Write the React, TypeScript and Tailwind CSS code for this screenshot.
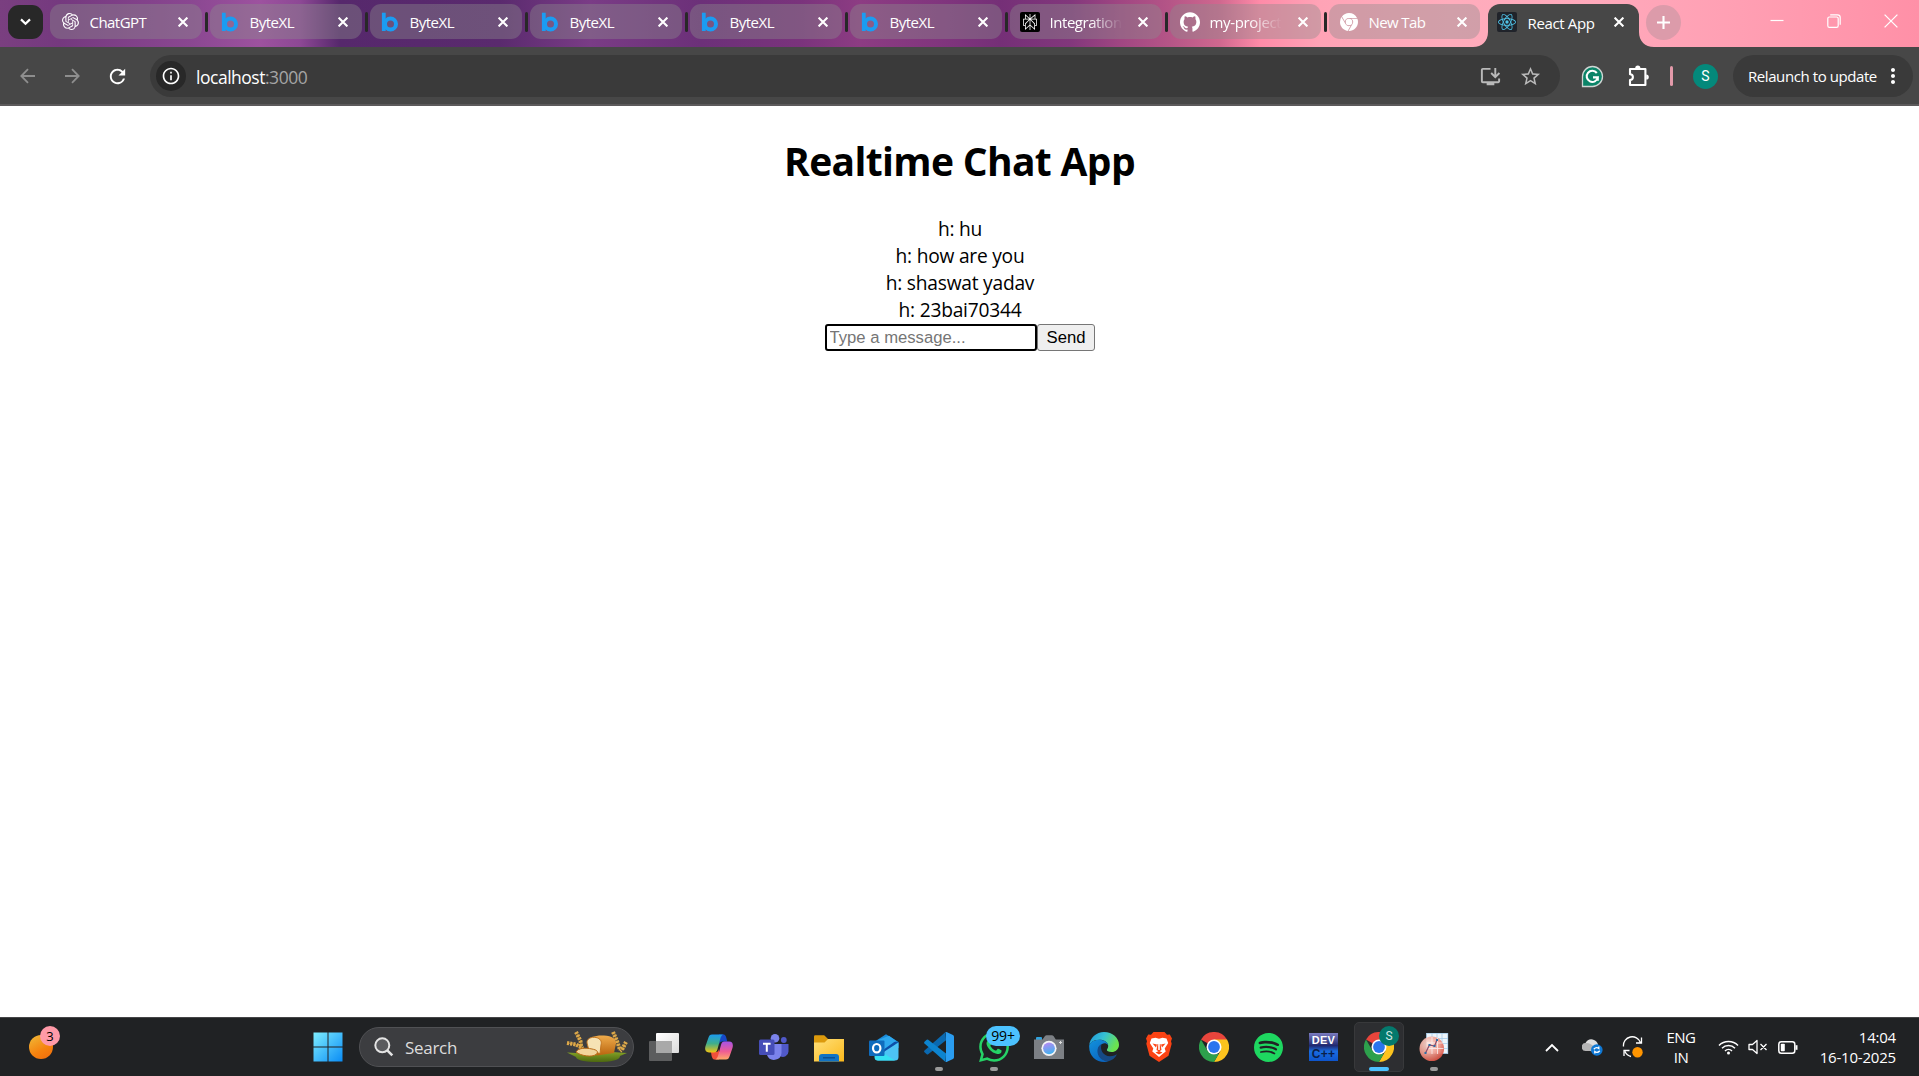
import React from "react";
import {
  SiOpenai,
  SiPerplexity,
  SiGithub,
  SiGooglechrome,
  SiReact,
  SiWhatsapp,
  SiSpotify,
} from "react-icons/si";
import { MdInstallDesktop, MdStarBorder, MdMoreVert, MdInfoOutline, MdRefresh } from "react-icons/md";

const UI = "font-['Open_Sans','Noto_Sans',sans-serif]";

function Cross() {
  return (
    <svg width="10" height="10" viewBox="0 0 10 10" stroke="#fff" strokeWidth="2.1">
      <path d="M.6 .6 9.4 9.4M9.4 .6 .6 9.4" />
    </svg>
  );
}

function ByteXL() {
  return (
    <svg width="18" height="20" viewBox="0 0 18 20" fill="none" stroke="#1b9cf2">
      <path d="M2.800 .7v18.300" strokeWidth="3.800" />
      <circle cx="9.500" cy="12" r="5.500" strokeWidth="4" />
    </svg>
  );
}

function Perplexity() {
  return (
    <div className="flex size-5 items-center justify-center rounded-[2px] bg-black text-white">
      <SiPerplexity size={16} />
    </div>
  );
}

function ReactMark() {
  return (
    <div className="flex size-5 items-center justify-center rounded-[2px] bg-[#20232a] text-[#4fc3e8]">
      <SiReact size={18} />
    </div>
  );
}

type TabInfo = { title: string; icon: React.ReactNode; text: string; fade?: boolean; width?: string };

const tabs: TabInfo[] = [
  { title: "ChatGPT", icon: <SiOpenai size={17} color="#fff" />, text: "tracking-[-0.55px]" },
  { title: "ByteXL", icon: <ByteXL />, text: "tracking-[-0.5px]" },
  { title: "ByteXL", icon: <ByteXL />, text: "tracking-[-0.5px]" },
  { title: "ByteXL", icon: <ByteXL />, text: "tracking-[-0.5px]" },
  { title: "ByteXL", icon: <ByteXL />, text: "tracking-[-0.5px]" },
  { title: "ByteXL", icon: <ByteXL />, text: "tracking-[-0.5px]" },
  { title: "Integration", icon: <Perplexity />, text: "tracking-[-0.45px]", fade: true },
  {
    title: "my-project",
    icon: <SiGithub size={20} color="#fff" />,
    text: "tracking-[-0.35px]",
    fade: true,
    width: "w-[151px]",
  },
  { title: "New Tab", icon: <SiGooglechrome size={18} color="#fff" />, text: "tracking-[-0.6px]", width: "w-[151px]" },
];

function Tab({ t, last }: { t: TabInfo; last: boolean }) {
  return (
    <>
      <div
        className={`flex h-[35px] shrink-0 items-center rounded-[11px] bg-[#8c8c8c]/40 pl-[10px] ${t.width ?? "w-[152px]"}`}
      >
        <div className="flex w-5 shrink-0 items-center justify-center">{t.icon}</div>
        <div
          className={`mt-px ml-[9.500px] w-[72px] overflow-hidden text-[15px] leading-[22px] whitespace-nowrap text-white ${t.text} ${
            t.fade ? "[mask-image:linear-gradient(90deg,#000_55%,transparent)]" : ""
          }`}
        >
          {t.title}
        </div>
        <div className="ml-[16px] flex">
          <Cross />
        </div>
      </div>
      {!last && <div className="mr-[2.500px] ml-[3px] h-5 w-[2.500px] shrink-0 rounded-full bg-[#282828]" />}
    </>
  );
}

function TabStrip() {
  return (
    <div className="flex h-[47px] items-start bg-[linear-gradient(90deg,#7a3f80_0px,#75397f_60px,#8a4791_190px,#9d529f_260px,#8d4895_300px,#56286c_340px,#5a2a6e_500px,#7a3c86_590px,#6c3079_700px,#7a337c_800px,#8d3c83_860px,#7f347d_950px,#752f77_1000px,#82377c_1070px,#a04682_1120px,#b55587_1170px,#d0688f_1220px,#ff8ba8_1260px,#ffa3b6_1320px,#ffacbc_1450px,#ffa9bb_1600px,#ff9fb3_1740px,#ff90a7_1919px)] pt-1">
      <div className="mt-px ml-2 flex h-[34px] w-[35px] shrink-0 items-center justify-center rounded-[11px] bg-[#282828]">
        <svg width="11" height="8" viewBox="0 0 11 8" fill="none" stroke="#fff" strokeWidth="2.2">
          <path d="m1 1.4 4.5 4.4L10 1.4" />
        </svg>
      </div>
      <div className="ml-[7px] flex items-center">
        {tabs.map((t, i) => (
          <Tab key={i} t={t} last={i === tabs.length - 1} />
        ))}
      </div>
      <div className="-ml-[7px] flex h-[43px] items-end">
        <svg width="15" height="15" viewBox="0 0 15 15" fill="#474747">
          <path d="M0 15C9 15 15 9 15 0v15z" />
        </svg>
        <div className="flex h-[43px] w-[151px] items-start rounded-t-[12px] bg-[#474747] pt-2 pl-[9px]">
          <ReactMark />
          <div className="ml-[10.500px] w-[72px] text-[15px] leading-[22px] tracking-[-0.35px] whitespace-nowrap text-white">
            React App
          </div>
          <div className="mt-[5px] ml-[14px]">
            <Cross />
          </div>
        </div>
        <svg width="15" height="15" viewBox="0 0 15 15" fill="#474747">
          <path d="M15 15C6 15 0 9 0 0v15z" />
        </svg>
      </div>
      <div className="mt-px -ml-2 flex size-[35px] items-center justify-center rounded-full bg-[#dc9baa]">
        <svg width="13" height="13" viewBox="0 0 13 13" stroke="#fff" strokeWidth="2.1">
          <path d="M6.5 0v13M0 6.5h13" />
        </svg>
      </div>
      <div className="mt-[10px] mr-[21px] ml-auto flex items-center gap-[43px]">
        <svg width="14" height="14" viewBox="0 0 14 14" stroke="#fff" strokeWidth="1.2">
          <path d="M.5 6.5h13" />
        </svg>
        <svg width="14" height="14" viewBox="0 0 14 14" fill="none" stroke="#fff" strokeWidth="1.2">
          <rect x=".8" y="3" width="10.4" height="10.4" rx="1.6" />
          <path d="M3.2 .8h7.3a2.7 2.7 0 0 1 2.7 2.7v7.3" />
        </svg>
        <svg width="14" height="14" viewBox="0 0 14 14" stroke="#fff" strokeWidth="1.3">
          <path d="M.6 .6 13.4 13.4M13.4 .6 .6 13.4" />
        </svg>
      </div>
    </div>
  );
}

function Toolbar() {
  return (
    <div className="flex h-[59px] items-start border-b-2 border-[#5c5a5b] bg-[#474747] pt-2">
      <div className="flex h-[42px] w-[150px] shrink-0 items-center pl-5">
        <svg width="15" height="16" viewBox="0 0 15 16" fill="none" stroke="#8e8e8e" strokeWidth="1.8">
          <path d="M15 8H1.5M8 1.2 1.3 8 8 14.8" />
        </svg>
        <svg className="ml-[30px]" width="15" height="16" viewBox="0 0 15 16" fill="none" stroke="#8e8e8e" strokeWidth="1.8">
          <path d="M0 8h13.5M7 1.2 13.7 8 7 14.8" />
        </svg>
        <MdRefresh className="ml-[26px]" size={23} color="#fff" />
      </div>
      <div className="flex h-[42px] w-[1410px] shrink-0 items-center rounded-full bg-[#3a3a3a] pl-[6px]">
        <div className="flex size-[30px] items-center justify-center rounded-full bg-[#282828]">
          <MdInfoOutline size={20} color="#fff" />
        </div>
        <div className="mt-px ml-[10px] text-[17.500px] leading-6 tracking-[-0.480px] text-white">
          localhost<span className="text-[#a5a5a5]">:3000</span>
        </div>
        <MdInstallDesktop className="mr-[17px] ml-auto" size={23} color="#b9b9b9" />
        <MdStarBorder className="mr-[18px]" size={23} color="#b9b9b9" />
      </div>
      <div className="ml-[21px] flex h-[42px] items-center">
        <svg width="23" height="23" viewBox="0 0 23 23">
          <path d="M1.5 21.5V11.5a10 10 0 1 1 10 10z" fill="#0b8468" stroke="#cfd6d4" strokeWidth="1.3" />
          <path d="M15.800 8A5.600 5.600 0 1 0 16.800 12.400H12M16.800 12.400v3.400" fill="none" stroke="#fff" strokeWidth="2.1" />
        </svg>
        <svg className="ml-[24px]" width="22" height="22" viewBox="0 0 22 22" fill="none" stroke="#fff" strokeWidth="2.1" strokeLinejoin="round">
          <path d="M2 4h15.400V20H2v-5a2.900 2.900 0 0 0 0-5.800z" />
          <path d="M7.200 3.200a2.600 2.600 0 0 1 5.200 0zM18.200 9.400a2.600 2.600 0 0 1 0 5.200z" fill="#fff" stroke="none" />
        </svg>
        <div className="ml-[20px] h-5 w-[3px] rounded-full bg-[#e39aaa]" />
        <div className="ml-[20px] flex size-[25px] items-center justify-center rounded-full bg-[#04897b] font-[Roboto,sans-serif] text-[14px] leading-none text-white">
          S
        </div>
      </div>
      <div className="ml-[15px] flex h-[42px] w-[180px] items-center rounded-full bg-[#3a3a3a] pl-[15px]">
        <span className="w-[130px] text-[15px] leading-5 tracking-[-0.420px] whitespace-nowrap text-white">
          Relaunch to update
        </span>
        <MdMoreVert className="ml-[3px]" size={24} color="#fff" />
      </div>
    </div>
  );
}

const messages = ["h: hu", "h: how are you", "h: shaswat yadav", "h: 23bai70344"];

function ChatPage() {
  return (
    <main className="flex flex-1 flex-col items-center bg-white pt-7 text-black">
      <h1 className="text-[39px] leading-[54px] font-bold tracking-[-0.650px] whitespace-nowrap">Realtime Chat App</h1>
      <div className="mt-[27px] flex flex-col items-center">
        {messages.map((m) => (
          <div key={m} className="h-[27px] pl-px text-[19.200px] leading-[27px] tracking-[-0.230px] whitespace-nowrap">
            {m}
          </div>
        ))}
      </div>
      <div className="mt-[1px] flex">
        <input
          className="h-[27px] w-[212px] rounded-[3px] border-2 border-black px-[3px] font-['Liberation_Sans',Arial,sans-serif] text-[16.670px] placeholder:text-[#757575] focus:outline-none"
          placeholder="Type a message..."
        />
        <button className="h-[27px] w-[58px] rounded-[3px] border border-[#767676] bg-[#efefef] pt-px pl-px font-['Liberation_Sans',Arial,sans-serif] text-[16.670px] leading-none">
          Send
        </button>
      </div>
    </main>
  );
}

function Wheat({ d }: { d: string }) {
  return (
    <>
      <path d={d} stroke="#a8732a" strokeWidth="1" fill="none" />
      <path d={d} stroke="#dda94a" strokeWidth="4" strokeDasharray="2.200 1" fill="none" />
    </>
  );
}

function Bread() {
  return (
    <svg width="62" height="32" viewBox="0 0 62 32">
      <defs>
        <linearGradient id="crust" x1="0" y1="0" x2="0" y2="1">
          <stop offset="0" stopColor="#f0ac4c" />
          <stop offset="1" stopColor="#b9650f" />
        </linearGradient>
        <linearGradient id="grass" x1="0" y1="0" x2="0" y2="1">
          <stop offset="0" stopColor="#83a226" />
          <stop offset="1" stopColor="#4c6710" />
        </linearGradient>
      </defs>
      <path d="M1 21.500l9 .5 8-1h28l15 1-7 3c0 4-9 6-22 6s-22-2-22-5z" fill="url(#grass)" />
      <Wheat d="M10 1l4.500 9 1 8" />
      <Wheat d="M1 12l9 1.500 7 4" />
      <Wheat d="M47 1l4 9 3 9" />
      <Wheat d="M60 11l-3 6-3 3" />
      <path d="M21 11c1-5 9-7 17-6.500 8 .5 12.500 3.500 12 8l-2 9.500-17 2.500-8-5z" fill="url(#crust)" />
      <path d="M21 12c-.5-4 4-6.500 9-5.500 4.500 1 6 4 5 7.500l-1 8.500-11-3z" fill="#f6e2b4" stroke="#c07420" />
      <path d="M10 21c2-4 9-4.500 16-3 5 1 7 2.500 4 5.500-4 3-15 1.500-20-2.500z" fill="#f2d59c" stroke="#b96a17" />
    </svg>
  );
}

function WindowsLogo() {
  return (
    <svg width="30" height="30" viewBox="0 0 30 30">
      <defs>
        <linearGradient id="win" x1="0" y1="0" x2="1" y2="1">
          <stop offset="0" stopColor="#7eeeff" />
          <stop offset="1" stopColor="#0a8cf5" />
        </linearGradient>
      </defs>
      <path d="M.5 .5h14v14H.500zM15.500 .5h14v14h-14zM.5 15.500h14v14H.500zM15.500 15.500h14v14h-14z" fill="url(#win)" />
    </svg>
  );
}

function TaskView() {
  return (
    <svg width="30" height="28" viewBox="0 0 30 28">
      <defs>
        <linearGradient id="tv" x1="0" y1="0" x2="1" y2="1">
          <stop offset="0" stopColor="#fff" />
          <stop offset="1" stopColor="#dcdcdc" />
        </linearGradient>
      </defs>
      <rect x="0" y="8" width="23" height="20" rx="1" fill="#5c5d5e" />
      <rect x="7" y="0" width="23" height="20" rx="1" fill="url(#tv)" />
      <rect x="7" y="8" width="16" height="12" fill="#a9a9a9" />
    </svg>
  );
}

function Copilot() {
  return (
    <svg width="28" height="26" viewBox="0 0 28 26">
      <defs>
        <linearGradient id="cpa" x1="0" y1="0" x2="0" y2="1">
          <stop offset="0" stopColor="#1b9bf0" />
          <stop offset=".5" stopColor="#3fae8c" />
          <stop offset="1" stopColor="#f2c511" />
        </linearGradient>
        <linearGradient id="cpb" x1="0" y1="0" x2="0" y2="1">
          <stop offset="0" stopColor="#a653e8" />
          <stop offset=".55" stopColor="#ee5c94" />
          <stop offset="1" stopColor="#ffa968" />
        </linearGradient>
      </defs>
      <path d="M14 .5h4.500c1.800 0 2.500 2 3 4l.8 3h-5c-2 0-2.500 1-3 3z" fill="#1649c8" />
      <path d="M14 25.500H9.500c-1.800 0-2.500-2-3-4l-.5-3.500h5c2 0 2.500-1 3-3z" fill="#f0503a" />
      <path d="M7 .5h12c-2 0-3 2-3.600 4l-3 11c-.6 2-1.400 3-3.400 3H4C0 18.500-.500 15 .7 11.500L3.500 3.500C4.200 1.500 5 .500 7 .500z" fill="url(#cpa)" />
      <path d="M21 25.500H9.500c2 0 3-2 3.600-4l3-11c.6-2 1.400-3 3.400-3h4.500c4 0 4.500 3.500 3.300 7l-2.800 8c-.7 2-1.500 3-3.500 3z" fill="url(#cpb)" />
    </svg>
  );
}

function Teams() {
  return (
    <svg width="30" height="27" viewBox="0 0 30 27">
      <circle cx="24.800" cy="6" r="2.900" fill="#5059c9" />
      <path d="M21 10h8.500v7.500a5.500 5.500 0 0 1-8.500 4.500z" fill="#5059c9" />
      <circle cx="16" cy="4.300" r="4.300" fill="#7b83eb" />
      <path d="M9 10h13.500v9a7.500 7.500 0 0 1-14.500 2z" fill="#7b83eb" />
      <rect x="0" y="5.500" width="15.500" height="15.500" rx="1.500" fill="#464eb8" />
      <path d="M4 9.800h7.600M7.800 9.800v8" stroke="#fff" strokeWidth="2" />
    </svg>
  );
}

function Explorer() {
  return (
    <svg width="30" height="27" viewBox="0 0 30 27">
      <defs>
        <linearGradient id="fe" x1="0" y1="0" x2="1" y2="1">
          <stop offset="0" stopColor="#ffe07a" />
          <stop offset="1" stopColor="#fbb91c" />
        </linearGradient>
      </defs>
      <path d="M0 1.500Q0 .3 1.200 .3h9L14 4v6H0z" fill="#dc9a0c" />
      <path d="M0 7.500h10.500L14 4h16v22.500H0z" fill="url(#fe)" />
      <path d="M5 26.500v-4.500q0-3 3-3h14q3 0 3 3v4.500z" fill="#1173c4" />
      <path d="M9 22.800h12" stroke="#0b4b8a" strokeWidth="1.300" />
    </svg>
  );
}

function Outlook() {
  return (
    <svg width="30" height="27" viewBox="0 0 30 27">
      <path d="M5 8 17 .3 29.500 8v6H5z" fill="#1a8ad8" />
      <path d="M9 8h20.500L17 18 7 14z" fill="#0d4fa8" />
      <path d="M8 6.500 20 1.800l7 5L14 16z" fill="#2ea8ee" />
      <path d="M29.500 8.500V23q0 3.500-3.500 3.500H9q-3 0-3-3z" fill="#4cc3f5" />
      <path d="M6 14 26 26.500H9q-3.500 0-3.500-3.500z" fill="#35e0f2" />
      <rect x="0" y="6.500" width="15.500" height="15.500" rx="1" fill="#0f6cbd" />
      <ellipse cx="7.700" cy="14.200" rx="3.700" ry="4.200" fill="none" stroke="#fff" strokeWidth="2.200" />
    </svg>
  );
}

function VSCode() {
  return (
    <svg width="30" height="30" viewBox="0 0 30 30">
      <path d="M21.500 0 22 8.200 4.200 22.200q-.8.600-1.500 0L.5 20.300q-.8-.9 0-1.700z" fill="#0a69b0" />
      <path d="M21.500 30 22 21.500 4.200 7.800q-.8-.6-1.500 0L.5 9.700q-.8.900 0 1.700z" fill="#0d84cf" />
      <path d="M21.500 29.800q1 .4 1.500 0l6-2.900q1-.5 1-1.700V4.800q0-1.200-1-1.700L23 .2q-.8-.4-1.700.2.700.2.700 1.300v26.600q0 1-.5 1.500z" fill="#2a9df0" />
    </svg>
  );
}

function CameraIcon() {
  return (
    <svg width="30" height="24" viewBox="0 0 30 24">
      <defs>
        <linearGradient id="cam" x1=".3" y1="0" x2=".6" y2="1">
          <stop offset="0" stopColor="#b68af2" />
          <stop offset="1" stopColor="#3fb2ee" />
        </linearGradient>
      </defs>
      <rect x="2" y="2" width="6" height="4" rx="1" fill="#2fa4e0" />
      <path d="M0 4.500h8.500L11 1q.6-.8 1.600-.8h5.300q1 0 1.600.8L21.800 4.500H30V24H0z" fill="#7c8085" />
      <circle cx="15" cy="13.300" r="7.600" fill="#f4f4f6" />
      <circle cx="15" cy="13.300" r="5.900" fill="url(#cam)" />
      <path d="M26.500 6v3M25 7.500h3" stroke="#ddd" />
    </svg>
  );
}

function Edge() {
  return (
    <svg width="30" height="30" viewBox="0 0 30 30">
      <defs>
        <linearGradient id="eg" x1="0" y1="0" x2="1" y2=".4">
          <stop offset="0" stopColor="#1d93dc" />
          <stop offset=".5" stopColor="#36c1d4" />
          <stop offset="1" stopColor="#6be34f" />
        </linearGradient>
        <linearGradient id="eb" x1="0" y1="0" x2=".6" y2="1">
          <stop offset="0" stopColor="#1292dd" />
          <stop offset="1" stopColor="#0b66c0" />
        </linearGradient>
      </defs>
      <path d="M.2 13.500C1 5.500 7.500 0 15 0c8.500 0 15 6 15 12.700 0 4.600-3.600 7.300-7.300 7.300-3.500 0-4.800-1.200-4.800-2 0-.9 1.300-1.500 1.300-4 0-3.500-4-6.200-8.700-6.200C4.500 7.800 1.200 10.800.2 13.500z" fill="url(#eg)" />
      <path d="M.2 13.500C1.500 10 5.500 7.800 10 7.800c4.700 0 8.500 2.200 9 5.200-1.500-2-4-2.200-6-1-3.500 2-5 6-3.500 10 1.700 4.300 5.500 6.800 10 7.300C10 32-.500 25.500.2 13.500z" fill="url(#eb)" />
      <path d="M12.500 12.300c-1.800 5 1.500 12 8.500 12 3.500 0 5.800-1.300 7-2-2 4-5 6-8.500 7C12 29 8 24 8.500 18c.3-2.800 2-5 4-5.700z" fill="#164a86" />
    </svg>
  );
}

function Brave() {
  return (
    <svg width="26" height="30" viewBox="0 0 26 30">
      <path d="M7.500 0h11l2.500 2.700 2.800-.2L26 6.500l-1 2.700.7 2.500-3.200 12-9.500 6.300-9.500-6.300L.3 11.700 1 9.200 0 6.500l2.200-4 2.800.2z" fill="#fb4314" />
      <path d="M5.500 6.500 9.500 5.800 13 6.700l3.500-.9 4 .7 1.700 4.500-3.500 5.500 1 3L16.500 22 13 25l-3.500-3-3.200-2.500 1-3L3.800 11z" fill="#fff" />
      <path d="M6.500 11.500l4.500 1-1 3zM19.500 11.500l-4.500 1 1 3zM11.500 12h3l1 6-2.500 1.500-2.500-1.500zM9.500 20.500l3.500-1.500 3.500 1.500-3.500 2z" fill="#fb4314" />
      <path d="M12.200 9h1.600v9h-1.600z" fill="#fff" />
    </svg>
  );
}

function Chrome() {
  return (
    <svg width="30" height="30" viewBox="0 0 30 30">
      <path d="M15 15 2 7.500A15 15 0 0 1 28 7.500z" fill="#e8453c" />
      <path d="M15 15V7.500h13A15 15 0 0 1 15 30l6.500-11.200z" fill="#fcc31e" />
      <path d="M2 7.500 8.500 18.800 15 22.500l4.800-.8L15 30A15 15 0 0 1 2 7.500z" fill="#2da04c" />
      <circle cx="15" cy="15" r="7.500" fill="#fff" />
      <circle cx="15" cy="15" r="5.900" fill="#2a75ee" />
    </svg>
  );
}

function DevCpp() {
  return (
    <div className="flex h-7 w-[29px] flex-col items-center bg-[linear-gradient(180deg,#7b7cc0_0%,#20286f_45%,#1a6ce0_65%,#0e55cc_100%)] font-['Liberation_Sans',sans-serif] leading-none font-bold">
      <span className="h-[14px] pt-px text-[11px] leading-[13px] tracking-[0.300px] text-white">DEV</span>
      <span className="h-[14px] text-[12px] leading-[14px] tracking-[0.300px] text-[#0a1e4a]">C++</span>
    </div>
  );
}

function Plot() {
  return (
    <svg width="30" height="30" viewBox="0 0 30 30">
      <defs>
        <radialGradient id="pl" cx=".35" cy=".3" r=".75">
          <stop offset="0" stopColor="#fde0d8" />
          <stop offset=".6" stopColor="#f09a8c" />
          <stop offset="1" stopColor="#dc5142" />
        </radialGradient>
      </defs>
      <rect x="7.500" y="1" width="21.500" height="20.500" fill="#eef5fb" />
      <path d="M7.500 6.500H29M7.500 11.500H29M7.500 16.500H29M7.500 21.500H29M7.500 1.500H29M7.500 1v21M13 1v21M18 1v21M23 1v21M28.700 1v21" stroke="#a4cbea" strokeWidth=".8" />
      <circle cx="12.800" cy="16.800" r="12.300" fill="url(#pl)" opacity=".92" />
      <path d="M8 11h16M8 16.500h16.500M13 5v17M18.500 6v16" stroke="#fff" strokeWidth=".9" opacity=".75" />
      <path d="m6.500 21 4-8 5 1 2.500-6" fill="none" stroke="#8c4a66" strokeWidth="1.200" />
      <path d="M5.500 20h2v2h-2zM9.500 12h2v2h-2zM14.500 13h2v2h-2zM17 7h2v2h-2z" fill="#2d6fa6" />
    </svg>
  );
}

type AppInfo = { name: string; icon: React.ReactNode; mark?: string; active?: boolean; badge?: React.ReactNode };

const apps: AppInfo[] = [
  { name: "Task view", icon: <TaskView /> },
  { name: "Copilot", icon: <Copilot /> },
  { name: "Teams", icon: <Teams /> },
  { name: "Explorer", icon: <div className="pt-[2px]"><Explorer /></div> },
  { name: "Outlook", icon: <Outlook /> },
  { name: "VS Code", icon: <VSCode />, mark: "w-2 bg-[#9a9a9a]" },
  {
    name: "WhatsApp",
    icon: <SiWhatsapp size={30} color="#25d366" />,
    mark: "w-2 bg-[#9a9a9a]",
    badge: (
      <span className="absolute top-[8px] left-[20px] flex h-5 w-[34px] items-center justify-center rounded-full bg-[#4cc2ff] text-[14px] leading-none tracking-[-0.200px] text-black">
        99+
      </span>
    ),
  },
  { name: "Camera", icon: <CameraIcon /> },
  { name: "Edge", icon: <Edge /> },
  { name: "Brave", icon: <Brave /> },
  { name: "Chrome", icon: <Chrome /> },
  { name: "Spotify", icon: <SiSpotify size={29} color="#1ed760" /> },
  { name: "Dev-C++", icon: <DevCpp /> },
  {
    name: "Chrome window",
    icon: <Chrome />,
    mark: "w-5 bg-[#4cc2ff]",
    active: true,
    badge: (
      <span className="absolute top-[8px] left-[28px] flex size-5 items-center justify-center rounded-full bg-[#04796d] font-[Roboto,sans-serif] text-[12px] leading-none text-[#d5e8e5]">
        S
      </span>
    ),
  },
  { name: "Plot", icon: <Plot />, mark: "w-2 bg-[#9a9a9a]" },
];

function Taskbar() {
  return (
    <footer className="flex h-[59px] items-stretch border-t border-[#454547] bg-[#202224] text-white">
      <div className="relative w-[300px] shrink-0">
        <div className="mt-[17px] ml-[29px] size-6 rounded-full bg-[linear-gradient(150deg,#f0bc3a,#f5820e_60%,#ee6a0c)]" />
        <span className="absolute top-[8px] left-[40px] flex size-5 items-center justify-center rounded-full bg-[#ff9aa8] text-[13px] leading-none text-black">
          3
        </span>
      </div>
      <div className="flex w-[55px] items-center justify-center">
        <WindowsLogo />
      </div>
      <div className="mt-[9px] ml-[4px] flex h-10 w-[275px] shrink-0 items-center rounded-full border border-[#505154] bg-[#3c3d40] pl-[14px]">
        <svg width="20" height="20" viewBox="0 0 20 20" fill="none" stroke="#e4e4e4" strokeWidth="2">
          <circle cx="8.300" cy="8.300" r="7" fill="#5a5b5e" />
          <path d="m13.300 13.300 5 5" strokeWidth="2.600" />
        </svg>
        <span className="mt-px ml-[11px] text-[17px] leading-6 tracking-[-0.300px] text-[#dcdcdc]">Search</span>
        <div className="mr-[5px] ml-auto">
          <Bread />
        </div>
      </div>
      <div className="ml-[2px] flex">
        {apps.map((a) => (
          <div key={a.name} className="relative flex w-[55px] items-center justify-center">
            {a.active && (
              <div className="absolute inset-x-[2.500px] top-[4px] h-[50px] rounded-[5px] border border-[#38393b] bg-[#2d2e31]" />
            )}
            <div className="relative">{a.icon}</div>
            {a.badge}
            {a.mark && (
              <div className={`absolute bottom-[5px] left-1/2 h-1 -translate-x-1/2 rounded-full ${a.mark}`} />
            )}
          </div>
        ))}
      </div>
      <div className="mr-[23px] ml-auto flex items-center">
        <svg width="14" height="9" viewBox="0 0 14 9" fill="none" stroke="#fff" strokeWidth="1.800">
          <path d="m1 8 6-6 6 6" />
        </svg>
        <svg className="ml-[23px]" width="21" height="18" viewBox="0 0 21 18">
          <path d="M4 12.500a4 4 0 0 1-.5-7.500C5 1.500 9 .3 12 2c2 .8 3.500 2.500 4 4.500l-4 7z" fill="#dedede" />
          <path d="M3.500 5c3-.5 6 1 8 3l-3 5H4a4 4 0 0 1-.500-8z" fill="#b5b5b5" />
          <circle cx="14.800" cy="12" r="5.800" fill="#0f78d4" />
          <path d="M11.800 11.300q2.500-2.800 5-.8v-2M17.800 12.800q-2.500 2.800-5 .8v2" fill="none" stroke="#fff" strokeWidth="1.300" />
        </svg>
        <svg className="ml-[19px]" width="22" height="22" viewBox="0 0 22 22" fill="none" stroke="#fff" strokeWidth="1.300">
          <path d="M1.500 10.500a8.800 8.800 0 0 1 17-4M19.500 1.500v5.500h-5.500M9 20.500a9 9 0 0 1-6-5M2 20v-5.500h5.500" />
          <circle cx="15.500" cy="16.300" r="5.200" fill="#ff9500" stroke="none" />
        </svg>
        <div className="ml-[20px] w-[34px] text-center text-[15px] leading-5 tracking-[-0.550px]">ENG IN</div>
        <svg className="ml-[20px]" width="21" height="16" viewBox="0 0 21 16" fill="none" stroke="#fff" strokeWidth="1.500">
          <path d="M1 6.500a13.400 13.400 0 0 1 19 0M4 9.200a9.300 9.300 0 0 1 13 0M7 12a5 5 0 0 1 7 0" />
          <circle cx="10.500" cy="14" r="1.500" fill="#fff" stroke="none" />
        </svg>
        <svg className="ml-[9px]" width="20" height="16" viewBox="0 0 20 16" fill="none" stroke="#fff" strokeWidth="1.300">
          <path d="M1 5.500h3.500L9 1.500v13L4.500 10.500H1zM12.500 5l6 6M18.500 5l-6 6" strokeLinejoin="round" />
        </svg>
        <svg className="ml-[10px]" width="20" height="13" viewBox="0 0 20 13" fill="none" stroke="#fff" strokeWidth="1.500">
          <rect x=".8" y=".8" width="16" height="11.400" rx="2.500" />
          <rect x="2.800" y="2.800" width="4" height="7.400" rx=".8" fill="#fff" stroke="none" />
          <path d="M18.500 4.200v4.600" strokeWidth="2" />
        </svg>
        <div className="ml-[18px] w-[80px] text-right text-[15px] leading-5 tracking-[-0.200px] whitespace-nowrap">
          14:04
          <br />
          16-10-2025
        </div>
      </div>
    </footer>
  );
}

export default function App() {
  return (
    <div className={`flex h-[1076px] w-[1919px] flex-col overflow-hidden bg-white ${UI}`}>
      <TabStrip />
      <Toolbar />
      <ChatPage />
      <Taskbar />
    </div>
  );
}
